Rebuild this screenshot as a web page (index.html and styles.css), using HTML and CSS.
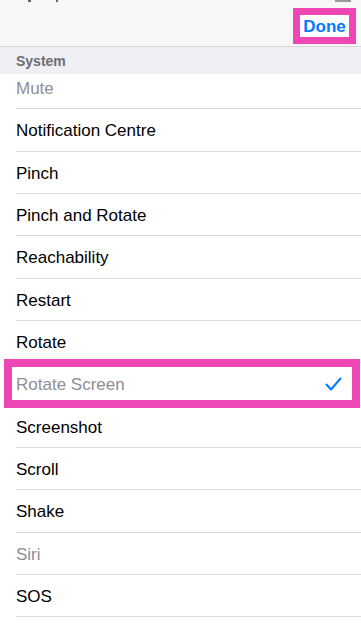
FILE: index.html
```html
<!DOCTYPE html>
<html>
<head>
<meta charset="utf-8">
<link rel="stylesheet" href="styles.css">
</head>
<body>
<div class="screen">
  <div class="status">
    <span class="st-mark st-a"></span>
    <span class="st-mark st-b"></span>
    <span class="st-batt"></span>
  </div>
  <header class="navbar">
    <span class="done">Done</span>
  </header>
  <div class="section">System</div>
  <ul class="list">
    <li class="row row-first dim"><span>Mute</span></li>
    <li class="row"><span>Notification Centre</span></li>
    <li class="row"><span>Pinch</span></li>
    <li class="row"><span>Pinch and Rotate</span></li>
    <li class="row"><span>Reachability</span></li>
    <li class="row"><span>Restart</span></li>
    <li class="row"><span>Rotate</span></li>
    <li class="row dim selected"><span>Rotate Screen</span>
      <svg class="check" width="17" height="14" viewBox="0 0 17 14"><path d="M1.5 7.5 L6 12.5 L15.5 1.5" fill="none" stroke="#007aff" stroke-width="2" stroke-linecap="round" stroke-linejoin="round"/></svg>
      <span class="hl hl-row"></span>
    </li>
    <li class="row"><span>Screenshot</span></li>
    <li class="row"><span>Scroll</span></li>
    <li class="row"><span>Shake</span></li>
    <li class="row dim"><span>Siri</span></li>
    <li class="row"><span>SOS</span></li>
  </ul>
</div>
</body>
</html>
```
FILE: styles.css
```css
* { box-sizing: border-box; }
html, body { margin: 0; padding: 0; }
body {
  width: 361px;
  height: 628px;
  overflow: hidden;
  background: #ffffff;
  font-family: "Liberation Sans", Arial, sans-serif;
  color: #000;
}
.screen { position: relative; width: 361px; height: 628px; overflow: hidden; }
.status {
  position: absolute; top: 0; left: 0; right: 0; height: 4px; z-index: 3;
}
.st-mark { position: absolute; top: 0; height: 2px; background: #666; }
.st-a { left: 28px; width: 3px; }
.st-b { left: 56px; width: 2px; }
.st-batt { position: absolute; top: 0; right: 10px; width: 16px; height: 2px; background: #999; }
.navbar {
  height: 47px;
  background: #f7f7f7;
  border-bottom: 1px solid #d8d8d8;
  display: flex;
  justify-content: flex-end;
  align-items: flex-start;
  padding: 8px 5px 0 0;
}
.done {
  width: 63px;
  height: 36px;
  border: 7.5px solid #ef46b5;
  background: #fff;
  color: #007aff;
  font-weight: bold;
  font-size: 17px;
  display: flex;
  align-items: center;
  justify-content: center;
  padding-top: 2px;
}
.hl {
  position: absolute;
  border: 8px solid #ef46b5;
  pointer-events: none;
}
.section {
  height: 27px;
  background: #efeff4;
  color: #6d6d72;
  font-size: 14px;
  font-weight: bold;
  padding-left: 16px;
  display: flex;
  align-items: center;
  padding-top: 1px;
}
.list { list-style: none; margin: 0; padding: 0 0 0 16px; }
.row {
  position: relative;
  height: 42.33px;
  border-bottom: 1px solid #dcdce0;
  display: flex;
  align-items: center;
  font-size: 17px;
  padding: 3px 19px 0 0;
}
.row > span:first-child { flex: 1; }
.row-first { height: 35.3px; padding: 0 19px 4px 0; }
.dim { color: #8e8e93; }
.check { display: block; margin-top: -3px; }
.hl-row { left: -12px; right: 1px; top: -4px; bottom: -3px; }
```
